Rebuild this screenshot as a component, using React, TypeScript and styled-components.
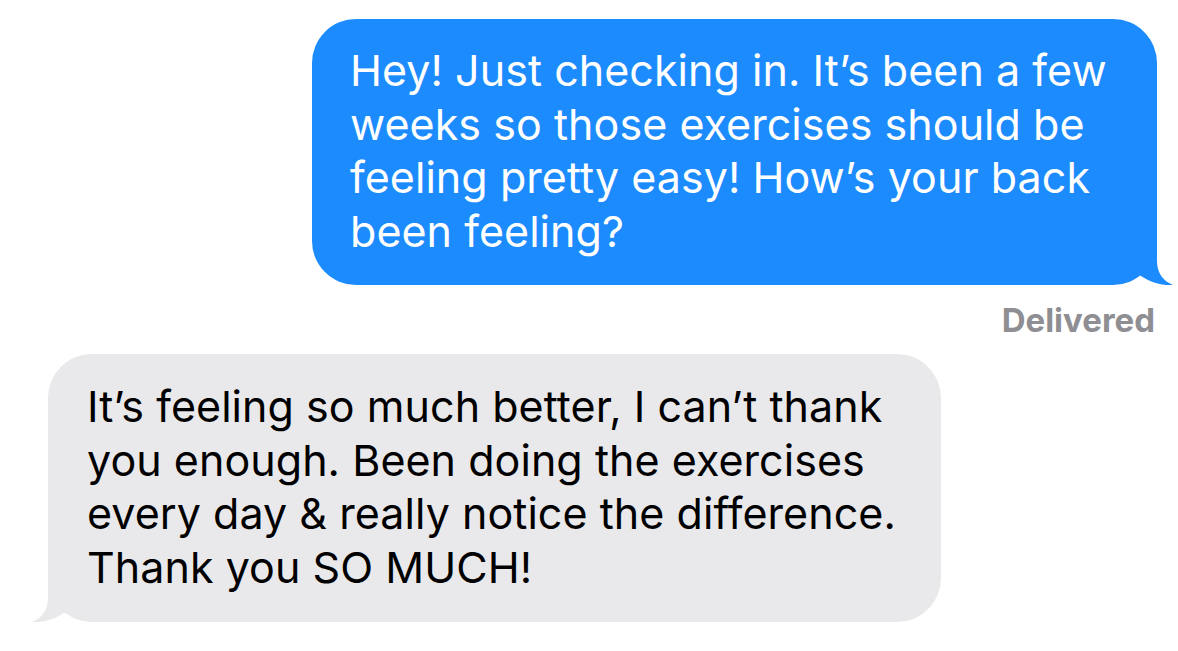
import React from "react";
import styled, { createGlobalStyle } from "styled-components";

const outgoing = [
  "Hey! Just checking in. It’s been a few",
  "weeks so those exercises should be",
  "feeling pretty easy! How’s your back",
  "been feeling?",
];

const incoming = [
  "It’s feeling so much better, I can’t thank",
  "you enough. Been doing the exercises",
  "every day & really notice the difference.",
  "Thank you SO MUCH!",
];

function Tail({ color, side }: { color: string; side: "left" | "right" }) {
  return (
    <TailSvg $side={side} width="76" height="50" viewBox="0 0 76 50">
      <path
        d="M60 0 V26 C60 38 66 46 76 50 C64 51 52 47 40.5 38.5 L30 20 Z"
        fill={color}
      />
    </TailSvg>
  );
}

export default function App() {
  return (
    <>
      <GlobalStyle />
      <Thread>
        <Row $mine>
          <Bubble $mine>
            {outgoing.map((l) => (
              <Line key={l}>{l}</Line>
            ))}
            <Tail color="#1c8bfe" side="right" />
          </Bubble>
        </Row>
        <Status>Delivered</Status>
        <Row>
          <Bubble>
            {incoming.map((l) => (
              <Line key={l}>{l}</Line>
            ))}
            <Tail color="#e9e9eb" side="left" />
          </Bubble>
        </Row>
      </Thread>
    </>
  );
}

const GlobalStyle = createGlobalStyle`
  html, body {
    margin: 0;
    padding: 0;
    background: #fff;
  }
  body {
    font-family: Inter, "Noto Sans", sans-serif;
    -webkit-font-smoothing: antialiased;
  }
`;

const Thread = styled.div`
  width: 1178px;
  height: 651px;
  padding: 19px 21px 0 48px;
  box-sizing: border-box;
  display: flex;
  flex-direction: column;
`;

const Row = styled.div<{ $mine?: boolean }>`
  display: flex;
  justify-content: ${(p) => (p.$mine ? "flex-end" : "flex-start")};
`;

const Bubble = styled.div<{ $mine?: boolean }>`
  position: relative;
  width: ${(p) => (p.$mine ? "845px" : "893px")};
  box-sizing: border-box;
  padding: ${(p) => (p.$mine ? "25px 20px 26px 38px" : "26px 20px 27px 39px")};
  border-radius: 44px;
  background: ${(p) => (p.$mine ? "#1c8bfe" : "#e9e9eb")};
  color: ${(p) => (p.$mine ? "#fff" : "#000")};
  font-size: 43px;
  line-height: 53.7px;
  letter-spacing: 0.05px;
`;

const Line = styled.div`
  white-space: nowrap;
`;

const TailSvg = styled.svg<{ $side: "left" | "right" }>`
  position: absolute;
  bottom: 0;
  ${(p) =>
    p.$side === "right"
      ? "right: -16px;"
      : "left: -16px; transform: scaleX(-1);"}
`;

const Status = styled.div`
  margin: 15px 2px 14px 0;
  text-align: right;
  font-family: Inter, "Noto Sans", sans-serif;
  font-weight: 700;
  font-size: 33px;
  line-height: 40px;
  color: #8e8e93;
`;
